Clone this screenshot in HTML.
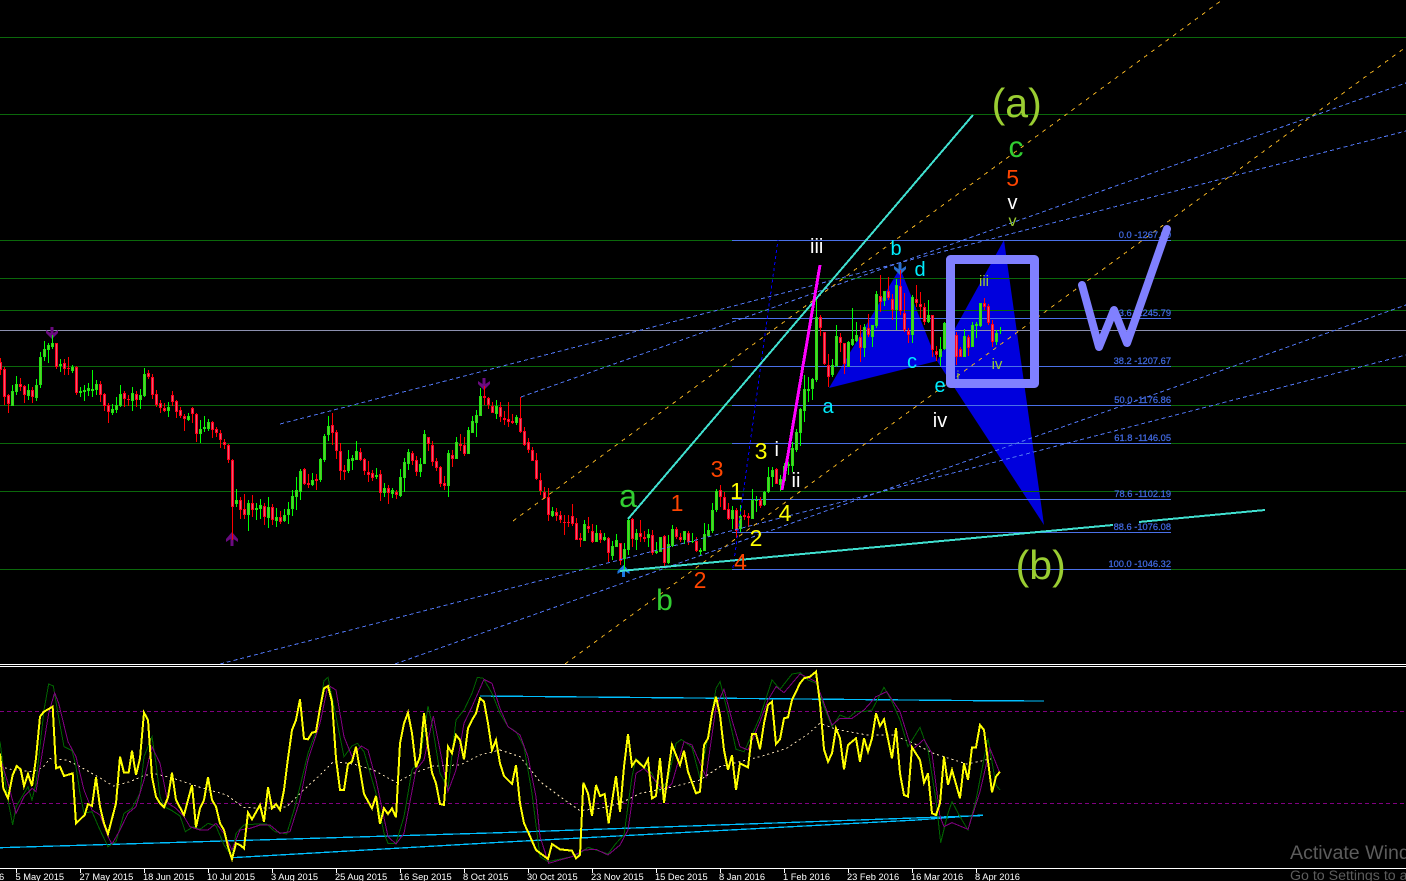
<!DOCTYPE html>
<html lang="en">
<head>
<meta charset="utf-8">
<title>Chart</title>
<style>
html,body{margin:0;padding:0;background:#000;width:1406px;height:881px;overflow:hidden}
svg{position:absolute;left:0;top:0;display:block}
text{font-family:"Liberation Sans",Arial,sans-serif}
.l{text-anchor:middle}
.f{font-size:9.3px;fill:#4169e1;stroke:#4169e1;stroke-width:.25;text-anchor:end}
.d{font-size:9.3px;fill:#fff}
.c{fill:none;shape-rendering:crispEdges}
</style>
</head>
<body>
<svg xmlns="http://www.w3.org/2000/svg" width="1406" height="881" viewBox="0 0 1406 881">
<rect width="1406" height="881" fill="#000"/>

<!-- butterfly pattern -->
<polygon points="829,388 900,268 937,361" fill="#0000dd"/>
<polygon points="937,361 1004,240 1044,525" fill="#0000dd"/>

<!-- horizontal lines -->
<g class="c" stroke="#0b680b" stroke-width="1">
<path d="M0 37.5H1406M0 114.5H1406M0 240.5H1406M0 278.5H1406M0 310.5H1406M0 366.5H1406M0 405.5H1406M0 443.5H1406M0 491.5H1406M0 569.5H1406"/>
</g>
<path class="c" stroke="#8c90b0" d="M0 330.5H1406"/>
<path class="c" stroke="#4a70e8" d="M732 240.5H1171M732 318.5H1171M732 366.5H1171M732 405.5H1171M732 443.5H1171M732 499.5H1171M732 532.5H1171M732 569.5H1171"/>

<!-- arrows -->
<g fill="#6a0a80">
<path transform="translate(52,327)" d="M-1.5 0H1.5V6L6 3V6L0 12L-6 6V3L-1.5 6Z"/>
<path transform="translate(484,378)" d="M-1.5 0H1.5V6L6 3V6L0 12L-6 6V3L-1.5 6Z"/>
<path transform="translate(232,546) scale(1,-1)" d="M-1.5 0H1.5V7L6 4V7L0 14L-6 7V4L-1.5 7Z"/>
</g>
<path fill="#1c78e0" transform="translate(623.5,577) scale(1,-1)" d="M-1.5 0H1.5V6L6 3V6L0 12L-6 6V3L-1.5 6Z"/>
<path fill="#2a70d0" transform="translate(900,263)" d="M-1.5 0H1.5V6L6 3V6L0 12L-6 6V3L-1.5 6Z"/>

<!-- candles (filled by script) -->
<g class="c" fill="none">
<path id="wg" stroke="#00ff00" stroke-width="1"/>
<path id="wr" stroke="#ff0000" stroke-width="1"/>
<path id="bg" stroke="#22e010" stroke-width="3"/>
<path id="br" stroke="#ff0020" stroke-width="3"/>
<path id="ig" stroke="#58cc30" stroke-width="1"/>
<path id="bi" stroke="#e85a70" stroke-width="1"/>
</g>

<!-- trend lines -->
<g fill="none" stroke-width="1" class="c">
<g stroke="#4f75f0" stroke-dasharray="4 3">
<path d="M521 397L1406 83"/>
<path d="M280 424L1406 131"/>
<path d="M220 664L1406 355"/>
<path d="M395 664L1406 305"/>
</g>
<path stroke="#0000ff" stroke-dasharray="3 3" d="M733 568L778 240"/>
<g stroke="#e8ac20" stroke-dasharray="4 5">
<path d="M513 521L1222 0"/>
<path d="M565 664L1406 47"/>
</g>
</g>
<g class="c" stroke="#40e0d0" stroke-width="2">
<path d="M628 519L973 115"/>
<path d="M620 571L1113 525M1139 522L1265 510"/>
</g>
<path class="c" stroke="#ff00ff" stroke-width="3" d="M782 490L820 265"/>

<!-- fib labels -->
<text class="f" x="1171" y="238">0.0 -1267.90</text>
<text class="f" x="1171" y="316">23.6 -1245.79</text>
<text class="f" x="1171" y="364">38.2 -1207.67</text>
<text class="f" x="1171" y="403">50.0 -1176.86</text>
<text class="f" x="1171" y="441">61.8 -1146.05</text>
<text class="f" x="1171" y="497">78.6 -1102.19</text>
<text class="f" x="1171" y="530">88.6 -1076.08</text>
<text class="f" x="1171" y="567">100.0 -1046.32</text>

<!-- wave labels -->
<text class="l" x="958" y="380" font-size="13" fill="#9acd32">i</text>

<!-- frame and W -->
<rect x="950.5" y="259.5" width="84" height="124" fill="none" stroke="#8080ff" stroke-width="9" stroke-linejoin="round"/>
<path d="M1082 285L1099 347L1114 310L1127 343L1167 229" fill="none" stroke="#8080ff" stroke-width="8" stroke-linecap="round" stroke-linejoin="round"/>

<g class="l">
<text class="l" x="1016.7" y="117" font-size="41" fill="#9acd32">(a)</text>
<text class="l" x="1040.7" y="579" font-size="41" fill="#9acd32">(b)</text>
<text class="l" x="1016" y="157" font-size="30" fill="#32cd32">c</text>
<text class="l" x="1012.7" y="186" font-size="23" fill="#ff4500">5</text>
<text class="l" x="1012.5" y="209" font-size="20" fill="#ffffff">v</text>
<text class="l" x="1012.5" y="226" font-size="16" fill="#9acd32">v</text>
<text class="l" x="628" y="507" font-size="32" fill="#32cd32">a</text>
<text class="l" x="664.5" y="610" font-size="30" fill="#32cd32">b</text>
<text class="l" x="677" y="511" font-size="23" fill="#ff4500">1</text>
<text class="l" x="717" y="477" font-size="23" fill="#ff4500">3</text>
<text class="l" x="700" y="588" font-size="23" fill="#ff4500">2</text>
<text class="l" x="740.5" y="570" font-size="23" fill="#ff4500">4</text>
<text class="l" x="736.5" y="499" font-size="23" fill="#ffff00">1</text>
<text class="l" x="761" y="459" font-size="23" fill="#ffff00">3</text>
<text class="l" x="756" y="546" font-size="23" fill="#ffff00">2</text>
<text class="l" x="785" y="521" font-size="23" fill="#ffff00">4</text>
<text class="l" x="776.7" y="456" font-size="20" fill="#ffffff">i</text>
<text class="l" x="796" y="487" font-size="20" fill="#ffffff">ii</text>
<text class="l" x="816.7" y="253" font-size="20" fill="#ffffff">iii</text>
<text class="l" x="940" y="427" font-size="20" fill="#ffffff">iv</text>
<text class="l" x="896" y="255" font-size="20" fill="#00eeff">b</text>
<text class="l" x="920" y="276" font-size="20" fill="#00eeff">d</text>
<text class="l" x="912" y="368" font-size="20" fill="#00eeff">c</text>
<text class="l" x="828" y="413" font-size="20" fill="#00eeff">a</text>
<text class="l" x="940" y="392" font-size="20" fill="#00eeff">e</text>
<text class="l" x="984" y="286" font-size="15" fill="#9acd32">iii</text>
<text class="l" x="997" y="369" font-size="15" fill="#9acd32">iv</text>
</g>

<!-- separators -->
<rect x="0" y="664" width="1406" height="1" fill="#fff"/>
<rect x="0" y="666" width="1406" height="1" fill="#fff"/>

<!-- indicator -->
<path class="c" stroke="#800080" stroke-dasharray="4 3" d="M0 711.5H1406M0 803.5H1406"/>
<g class="c" stroke="#00bfff" stroke-width="1.3">
<path d="M0 847.7L500 832.7L766.7 823.3L983 815.5"/>
<path d="M232 857.7L500 842.3L916.7 820L983 815"/>
<path d="M480 696L983 700.7L1044 701"/>
</g>

<g class="c" transform="translate(0,660) scale(.33333)" fill="none">
<polyline stroke="#f5deb3" stroke-width="3" stroke-dasharray="6 9" points="0,320 40,330 100,335 130,320 150,296 200,300 240,320 290,348 340,378 390,365 430,348 460,340 520,355 600,382 680,405 730,442 800,445 860,440 900,400 960,345 1000,305 1060,312 1120,330 1190,368 1240,340 1300,318 1380,315 1440,285 1500,270"/>
<polyline stroke="#006400" stroke-width="3" points="0,245 12,340 24,420 38,495 48,440 72,400 84,380 96,420 108,370 120,260 132,150 146,72 160,78 172,150 192,260 216,272 228,320 240,400 252,460 276,455 300,510 324,560 348,545 372,460 396,445 420,400 432,290 456,230 468,310 480,410 492,440 516,452 540,468 556,515 580,500 600,508 624,490 648,498 672,555 696,590 708,520 732,495 770,492 800,492 825,515 860,522 882,450 900,380 924,280 948,215 972,62 984,52 1008,170 1032,290 1056,258 1072,250 1092,275 1128,400 1152,520 1164,550 1188,550 1212,470 1236,330 1260,300 1284,138 1296,190 1320,340 1344,385 1368,180 1392,150 1416,100 1432,52 1450,55 1476,100 1500,160"/>
<polyline stroke="#800080" stroke-width="3" points="0,290 24,370 48,460 72,410 96,385 108,395 120,320 146,160 164,98 176,130 204,245 228,290 252,390 276,450 300,465 324,530 336,552 360,510 384,460 408,440 432,360 456,260 480,310 504,430 528,445 552,470 570,500 600,510 624,510 648,490 672,520 696,570 720,510 750,505 780,495 810,495 840,520 870,515 900,420 924,300 960,190 984,75 1008,90 1032,230 1056,290 1084,258 1104,270 1128,360 1164,530 1188,552 1212,520 1248,330 1272,300 1300,168 1320,270 1344,395 1368,330 1392,190 1416,140 1452,58 1476,70 1500,145"/>
<polyline stroke="#ffff00" stroke-width="6" points="0,280 10,385 24,415 38,345 50,318 62,328 72,378 84,342 96,378 108,295 120,170 132,155 158,140 168,325 180,320 192,348 218,340 228,490 254,465 264,432 276,438 288,352 300,440 312,490 324,522 348,430 360,290 372,338 386,338 396,272 408,345 420,295 432,158 444,180 456,350 468,410 480,430 492,442 504,412 516,338 528,420 552,465 576,375 588,502 600,445 612,420 624,352 636,420 648,440 660,490 672,510 684,560 696,597 708,550 720,555 732,565 744,458 756,478 780,435 792,485 804,382 816,445 828,432 840,450 852,390 864,295 876,210 888,180 900,118 912,236 924,238 936,218 948,215 960,145 972,85 984,78 996,125 1008,295 1020,390 1032,390 1044,312 1056,305 1068,260 1080,330 1092,402 1116,445 1128,408 1140,492 1152,445 1164,462 1176,445 1188,472 1200,250 1212,190 1224,158 1236,220 1248,322 1260,290 1272,160 1284,260 1296,338 1308,370 1320,432 1332,435 1344,260 1356,280 1368,225 1380,240 1392,298 1404,205 1416,180 1428,160 1440,115 1452,125 1464,190 1476,270 1488,240 1500,310"/>
</g>
<g class="c" transform="translate(500,660) scale(.33333)" fill="none">
<polyline stroke="#f5deb3" stroke-width="3" stroke-dasharray="6 9" points="0,270 60,290 120,365 180,410 240,452 300,445 360,430 420,400 500,385 600,360 660,320 780,290 860,265 920,225 960,190 1010,208 1100,225 1180,225 1240,250 1300,280 1400,312 1480,295"/>
<polyline stroke="#006400" stroke-width="3" points="0,160 24,200 48,215 72,260 96,400 120,590 144,605 216,590 240,580 264,562 288,570 324,582 348,550 372,525 396,350 408,295 432,320 456,340 480,395 504,360 528,250 544,238 576,262 600,355 624,230 648,85 660,65 684,160 708,268 732,275 756,225 780,170 816,60 840,88 876,42 900,38 924,60 950,70 972,140 996,200 1020,165 1044,175 1068,155 1092,155 1116,150 1152,82 1176,125 1200,180 1224,260 1260,202 1284,270 1308,420 1322,548 1344,460 1356,425 1380,470 1404,510 1428,420 1464,235 1488,375 1500,390"/>
<polyline stroke="#800080" stroke-width="3" points="0,145 24,200 60,225 84,290 108,410 120,530 146,610 180,600 216,590 252,570 288,568 324,585 360,555 384,510 408,340 432,325 456,350 492,395 516,370 552,245 576,255 600,310 618,350 648,140 672,88 696,180 720,260 744,270 780,185 804,120 828,80 852,98 900,42 948,65 972,130 996,195 1020,175 1056,175 1092,150 1128,110 1160,95 1200,155 1236,270 1272,238 1296,280 1320,470 1332,500 1356,488 1380,498 1404,508 1440,395 1470,265 1500,340"/>
<polyline stroke="#ffff00" stroke-width="6" points="0,310 12,348 36,372 48,315 60,430 72,490 84,515 108,570 144,597 156,552 180,568 216,572 228,595 240,585 250,368 264,400 276,468 288,375 300,408 314,402 326,490 348,348 360,455 372,320 384,222 396,318 408,300 432,322 444,298 456,415 468,408 480,295 492,428 516,255 540,315 552,272 564,335 588,400 600,395 612,255 624,235 636,160 648,110 660,165 672,270 684,330 696,285 708,390 720,310 744,322 756,222 768,222 780,268 792,190 804,135 816,125 828,252 840,238 852,175 864,172 876,120 900,70 912,55 930,50 948,35 960,130 972,268 984,305 996,280 1008,205 1020,235 1032,328 1044,255 1068,235 1080,305 1092,235 1104,275 1116,235 1128,160 1140,198 1152,178 1176,295 1188,205 1200,340 1212,405 1224,410 1236,262 1260,300 1272,368 1284,340 1296,460 1308,465 1320,430 1332,290 1344,375 1356,330 1380,415 1392,310 1404,360 1416,262 1428,262 1440,195 1452,210 1476,397 1488,350 1500,335"/>
</g>

<!-- date axis -->
<rect x="0" y="868" width="1406" height="13" fill="#000"/>
<rect x="0" y="868" width="1406" height="1" fill="#fff"/>
<path class="c" stroke="#fff" d="M16.5 868V873M80.5 868V873M144.5 868V873M208.5 868V873M272.5 868V873M336.5 868V873M400.5 868V873M464.5 868V873M528.5 868V873M592.5 868V873M656.5 868V873M720.5 868V873M784.5 868V873M848.5 868V873M912.5 868V873M976.5 868V873"/>
<text class="d" x="-1" y="880">6</text>
<text class="d" x="15.5" y="880">5 May 2015</text>
<text class="d" x="79.5" y="880">27 May 2015</text>
<text class="d" x="143" y="880">18 Jun 2015</text>
<text class="d" x="207" y="880">10 Jul 2015</text>
<text class="d" x="271" y="880">3 Aug 2015</text>
<text class="d" x="335" y="880">25 Aug 2015</text>
<text class="d" x="399" y="880">16 Sep 2015</text>
<text class="d" x="463" y="880">8 Oct 2015</text>
<text class="d" x="527" y="880">30 Oct 2015</text>
<text class="d" x="591" y="880">23 Nov 2015</text>
<text class="d" x="655" y="880">15 Dec 2015</text>
<text class="d" x="719" y="880">8 Jan 2016</text>
<text class="d" x="783" y="880">1 Feb 2016</text>
<text class="d" x="847" y="880">23 Feb 2016</text>
<text class="d" x="911" y="880">16 Mar 2016</text>
<text class="d" x="975" y="880">8 Apr 2016</text>

<!-- watermark -->
<text x="1290" y="859" font-size="19.6" fill="#5c5c5c">Activate Windows</text>
<text x="1290" y="880" font-size="14.2" fill="#5c5c5c">Go to Settings to activate Windows.</text>
</svg>

<script>
(function(){
var P={wg:'',wr:'',bg:'',br:'',bi:'',ig:''};
function add(x0,y0,s){
  s.split(',').forEach(function(t,i){
    t=t.trim();var c=t[0],n=t.slice(1).split(' ').map(Number);
    var x=x0+4*i+0.5;
    function Y(v){return Math.round(y0+v/3);}
    var a=Y(n[0]),b=Y(n[1]),d=Y(n[2]),e=Y(n[3]);
    if(e<=d)e=d+1;
    var seg='M'+x+' '+a+'V'+b;
    var bod='M'+x+' '+d+'V'+e;
    var inn=(e-d>2)?'M'+x+' '+(d+1)+'V'+(e-1):'';
    if(c=='g'){P.wg+=seg;P.bg+=bod;P.ig+=inn;}
    else{P.wr+=seg;P.br+=bod;P.bi+=inn;}
  });
}
add(0,320,"r115 165 125 150,r140 255 148 230,r222 280 226 252,g195 258 214 258,g168 225 192 215,r175 212 192 200,r195 248 198 226,g192 240 210 228,r200 250 210 230,g178 243 195 233,g96 203 110 194,g64 122 88 110,g70 128 76 90,g45 88 70 80,r68 148 70 140,g118 155 132 138,r118 165 130 148,r112 165 144 147,g135 158 140 154,r138 225 142 218,g200 232 212 218,g195 243 209 215,g190 228 204 214,g150 230 207 213,g180 225 192 210,r182 246 192 224,r220 274 222 258,r250 308 256 276,g252 285 267 280,g230 278 256 270,g195 262 222 258,r214 262 219 236,r225 258 237 240,g200 273 220 243,r214 262 222 240,g208 266 226 240,g144 232 162 228,r150 177 158 170,r162 238 170 225,r210 262 222 256,r240 280 250 263,r250 276 264 274,g246 290 262 273,r212 258 225 246,r240 295 244 276,r262 293 270 288,r282 332 288 297,g280 302 288 300,r262 308 265 282,r280 366 282 342,g300 370 327 342,g288 336 322 328,g297 332 306 326,r302 354 306 330,r320 350 328 340,r330 384 340 360,r358 386 366 376,r372 430 376 420,r418 660 420 560,g507 560 540 552,r530 598 540 570,r522 598 568 585,g540 633 550 585,r525 592 550 570,g548 600 564 570,g537 598 556 568,r550 615 558 590,g532 624 562 594,r552 614 562 600,g564 620 592 602,r574 612 592 605,g568 606 586 604,g546 612 568 586,g510 588 528 568,g472 570 510 530,g448 540 453 515,r445 495 448 492,r462 504 490 494,g460 498 480 494,r462 510 477 482,g415 486 418 480,g342 426 348 420,g288 362 318 344,r280 376 316 338,r330 418 336 392,r370 480 394 452,r435 480 450 456,g390 458 418 452,g405 450 414 422,g364 420 393 420,r384 424 396 420,r415 465 418 452,r424 486 455 465,r450 484 458 474,g444 476 464 470,r450 543 462 518,g489 532 504 520,r495 552 504 518,g504 535 510 522,r510 538 516 526");
add(400,370,"g296 380 320 378,g265 365 276 325,g238 300 246 282,r242 285 248 274,r258 318 270 306,g264 320 282 306,g180 282 192 282,r200 242 202 222,r212 288 226 276,r264 304 274 294,r288 352 292 342,r318 360 340 348,g240 380 250 348,r240 292 256 266,g200 268 216 266,r192 242 222 228,r200 258 226 252,g170 252 180 252,g138 190 152 190,g120 200 136 158,g55 138 78 138,r48 105 78 84,r80 118 84 106,r96 130 108 128,g90 146 108 132,r96 155 112 142,r124 165 144 150,r96 172 148 156,r132 162 154 158,g135 165 142 158,r82 190 145 185,r170 228 184 224,r205 250 216 240,r232 272 240 272,r250 330 270 328,r308 374 330 364,r352 388 366 384,r355 452 382 436,g412 440 424 438,r415 452 426 438,r424 458 436 450,r435 496 455 458,r436 470 456 460,r402 468 438 462,r445 510 460 510,r490 532 505 510,g450 514 462 512,r440 488 468 478,r462 520 482 516,g465 514 488 516,r480 520 490 510,g490 512 502 510,r500 575 505 550,g512 570 528 558,g492 532 510 530,r518 586 520 572,g520 600 538 568,g440 556 450 540,r445 532 448 506,g476 540 490 510,r450 515 490 500,r482 515 500 506,g478 530 492 504,r480 554 496 548,g515 552 542 550,g500 546 502 545,r495 595 498 580,g495 582 522 580,g466 530 476 528,r470 508 478 502,r490 516 502 510,g485 522 484 510,r482 524 490 516,g490 520 512 515,r500 545 513 542,g535 556 540 546,g458 542 492 542,g462 500 480 498,g400 490 420 482,g358 425 364 420,r346 410 360 382,r365 420 382 420,r400 450 418 446,g408 478 420 446,r415 505 420 482,g405 485 438 478,r420 450 434 440,r428 470 438 444,g358 448 390 446,g378 425 390 394,r380 414 390 408,g362 408 366 406,g290 370 322 366,g290 350 300 322,r295 342 298 342,g315 362 328 345");
add(784,290,"g518 575 528 572,g515 555 522 528,g455 545 473 528,g418 485 425 480,g355 468 357 428,g255 395 297 362,g262 335 297 302,g265 330 268 298");
add(816,220,"g235 485 292 480,r285 348 292 325,r335 435 335 432,r402 502 436 470,g418 470 436 465,g315 440 348 438,r340 395 352 368,r368 462 370 432,g362 442 365 440,g265 378 358 374,g305 365 344 362,r315 425 350 384,g312 410 322 384,r282 350 325 346,g315 380 316 350,g212 325 222 318,r165 275 228 245,g215 258 214 242,r172 240 214 235,r222 300 238 270,g178 330 195 270,r150 285 198 272,r220 335 278 330,r325 370 332 346,g225 368 232 346,r195 260 238 250,r215 295 252 260,r250 315 262 305,g240 310 285 305,r285 410 285 390,r378 422 392 404,g352 438 388 412,g305 390 310 388,g320 400 340 395,r330 420 340 400,r335 435 345 412,r380 412 388 410,g328 412 348 410,r345 408 352 385,g305 382 316 382,g305 355 312 318,g248 322 250 318,r235 270 250 260,r252 315 258 308,r300 380 312 365,g330 375 340 366,g320 342 330 334");
for(var k in P){document.getElementById(k).setAttribute('d',P[k]);}
})();
</script>
</body>
</html>
